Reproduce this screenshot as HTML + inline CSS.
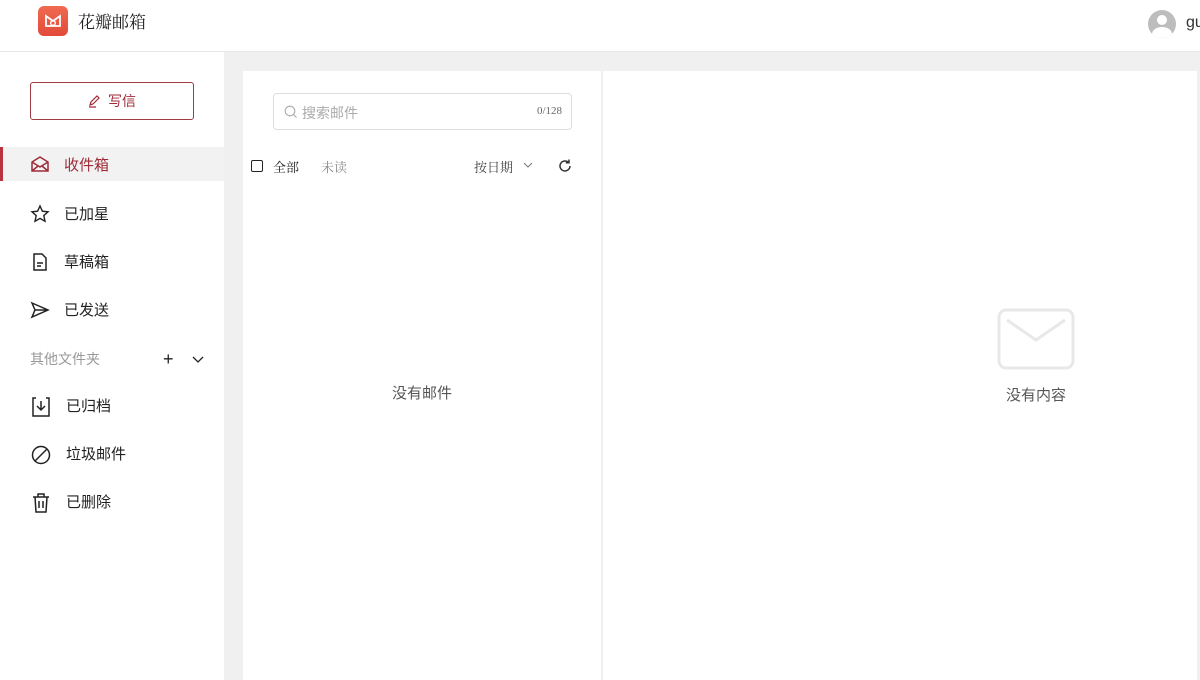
<!DOCTYPE html>
<html><head><meta charset="utf-8"><style>
*{margin:0;padding:0;box-sizing:border-box}
body{width:1200px;height:680px;overflow:hidden;background:#f0f0f0;font-family:"Liberation Sans","Noto Sans CJK SC",sans-serif;position:relative;color:#222}
.hdr{position:absolute;left:0;top:0;width:1200px;height:52px;background:#fff;border-bottom:1px solid #e8e8e8}
.logo{position:absolute;left:38px;top:6px;width:30px;height:30px;border-radius:6px;background:linear-gradient(#f06a50,#e24a3a)}
.brand{position:absolute;left:78px;top:8px;font-size:17px;font-family:"Liberation Serif","Noto Serif CJK SC",serif;color:#222}
.av{position:absolute;left:1148px;top:10px;width:28px;height:28px;border-radius:50%;background:#bdbdbd;overflow:hidden}
.side{position:absolute;left:0;top:52px;width:224px;height:628px;background:#fff}
.btn{position:absolute;left:30px;top:30px;width:164px;height:38px;border:1px solid #9e3b45;border-radius:3px;color:#9e2b38;font-size:14px;text-align:center;line-height:36px}
.item{position:absolute;left:0;width:224px;height:34px;font-size:15px;line-height:38px}
.item svg{position:absolute;left:30px;top:8px}
.item span{position:absolute;left:64px}
.act{background:#f2f2f2;color:#9e2b38;border-left:3px solid #b8333f}
.list{position:absolute;left:243px;top:71px;width:358px;height:609px;background:#fff}
.right{position:absolute;left:603px;top:71px;width:594px;height:609px;background:#fff}
.search{position:absolute;left:30px;top:22px;width:299px;height:37px;border:1px solid #ddd;border-radius:4px}
.gray{color:#999}
</style></head><body>
<div class="hdr">
 <div class="logo"><svg width="30" height="30" viewBox="0 0 30 30"><path d="M8 10v10h14V10l-7 5z" fill="none" stroke="#fff" stroke-width="1.8"/><circle cx="15" cy="17" r="2.3" fill="none" stroke="#fff" stroke-width="1.4"/></svg></div>
 <div class="brand">花瓣邮箱</div>
 <div class="av"><div style="position:absolute;left:9px;top:5px;width:10px;height:10px;border-radius:50%;background:#fff"></div><div style="position:absolute;left:4px;top:17px;width:20px;height:14px;border-radius:50%;background:#fff"></div></div>
 <div style="position:absolute;left:1186px;top:14px;font-size:16px;color:#333">gu</div>
</div>
<div class="side">
 <div class="btn"><svg width="14" height="14" viewBox="0 0 14 14" style="vertical-align:-2px;margin-right:6px"><path d="M2 11l1-3 6-6 2 2-6 6z M1 13h7" fill="none" stroke="#9e2b38" stroke-width="1.2"/></svg>写信</div>
 <div class="item act" style="top:95px"><svg width="20" height="18" viewBox="0 0 20 18" style="left:27px"><path d="M2 7l8-5 8 5v9H2z M2 7l8 5 8-5 M2 16l6-5 M18 16l-6-5" fill="none" stroke="#9e2b38" stroke-width="1.5"/></svg><span style="left:61px">收件箱</span></div>
 <div class="item" style="top:144px"><svg width="20" height="20" viewBox="0 0 20 20"><path d="M10 2l2.4 5.2 5.6.6-4.2 3.8 1.2 5.6L10 14.4 5 17.2l1.2-5.6L2 7.8l5.6-.6z" fill="none" stroke="#222" stroke-width="1.4"/></svg><span>已加星</span></div>
 <div class="item" style="top:192px"><svg width="20" height="20" viewBox="0 0 20 20"><path d="M4 2h8l4 4v12H4z M7 11h6 M7 14h4" fill="none" stroke="#222" stroke-width="1.5"/></svg><span>草稿箱</span></div>
 <div class="item" style="top:240px"><svg width="20" height="20" viewBox="0 0 20 20"><path d="M2 3l16 7-16 7 3-7z M5 10h13" fill="none" stroke="#222" stroke-width="1.5"/></svg><span>已发送</span></div>
 <div class="item gray" style="top:288px;font-size:14px"><span style="left:30px">其他文件夹</span><span style="left:163px;color:#222;font-size:18px">+</span><svg width="12" height="12" viewBox="0 0 12 12" style="left:192px;top:14px"><path d="M1 3l5 5 5-5" fill="none" stroke="#222" stroke-width="1.3"/></svg></div>
 <div class="item" style="top:336px"><svg width="22" height="22" viewBox="0 0 22 22"><path d="M6 2H3v18h16V2h-3 M11 5v9 M7 10l4 4 4-4" fill="none" stroke="#222" stroke-width="1.5"/></svg><span style="left:66px">已归档</span></div>
 <div class="item" style="top:384px"><svg width="22" height="22" viewBox="0 0 22 22"><circle cx="11" cy="11" r="8.5" fill="none" stroke="#222" stroke-width="1.5"/><path d="M5 17L17 5" stroke="#222" stroke-width="1.5"/></svg><span style="left:66px">垃圾邮件</span></div>
 <div class="item" style="top:432px"><svg width="22" height="22" viewBox="0 0 22 22"><path d="M3 5h16 M8 5V2h6v3 M5 5l1 15h10l1-15 M9 9v7 M13 9v7" fill="none" stroke="#222" stroke-width="1.5"/></svg><span style="left:66px">已删除</span></div>
</div>
<div class="list">
 <div class="search"><svg width="14" height="14" viewBox="0 0 14 14" style="position:absolute;left:10px;top:11px"><circle cx="6" cy="6" r="4.8" fill="none" stroke="#aaa" stroke-width="1.1"/><path d="M9.5 9.5l3 3" stroke="#aaa" stroke-width="1.1"/></svg><span class="gray" style="position:absolute;left:28px;top:9px;font-size:14px;color:#aaa">搜索邮件</span><span style="position:absolute;right:9px;top:11px;font-size:11px;color:#666;font-family:'Liberation Serif',serif">0/128</span></div>
 <div style="position:absolute;left:8px;top:89px;width:12px;height:12px;border:1.4px solid #222;border-radius:2px"></div>
 <div style="position:absolute;left:30px;top:86px;font-size:13px;font-family:'Liberation Serif','Noto Serif CJK SC',serif">全部</div>
 <div style="position:absolute;left:78px;top:86px;font-size:13px;color:#888;font-family:'Liberation Serif','Noto Serif CJK SC',serif">未读</div>
 <div style="position:absolute;left:231px;top:86px;font-size:13px;color:#444;font-family:'Liberation Serif','Noto Serif CJK SC',serif">按日期</div>
 <svg width="10" height="8" viewBox="0 0 10 8" style="position:absolute;left:280px;top:90px"><path d="M1 2l4 4 4-4" fill="none" stroke="#777" stroke-width="1"/></svg>
 <svg width="16" height="16" viewBox="0 0 16 16" style="position:absolute;left:314px;top:87px"><path d="M13 8a5 5 0 1 1-1.5-3.6 M12 1.5v3.2H8.8" fill="none" stroke="#333" stroke-width="1.5"/></svg>
 <div style="position:absolute;left:0;width:358px;top:311px;text-align:center;font-size:15px;color:#555">没有邮件</div>
</div>
<div class="right">
 <svg width="78" height="62" viewBox="0 0 78 62" style="position:absolute;left:394px;top:237px"><rect x="2" y="2" width="74" height="58" rx="7" fill="none" stroke="#e8e8e8" stroke-width="3"/><path d="M10 12l29 20 29-20" fill="none" stroke="#e8e8e8" stroke-width="3"/></svg>
 <div style="position:absolute;left:380px;width:106px;top:313px;text-align:center;font-size:15px;color:#555">没有内容</div>
</div>
</body></html>
